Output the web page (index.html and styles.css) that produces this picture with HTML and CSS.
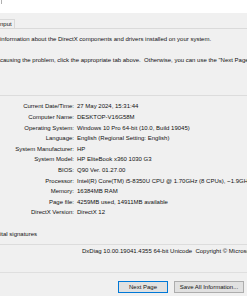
FILE: index.html
```html
<!DOCTYPE html>
<html lang="en">
<head>
    <meta charset="UTF-8">
    <meta name="viewport" content="width=device-width, initial-scale=1.0">
    <title>DirectX Diagnostic Tool</title>
    <link rel="stylesheet" href="styles.css">
</head>
<body>
    <!-- Title strip -->
    <div class="topbar"><span class="tick"></span></div>

    <!-- Tabs -->
    <div class="tabs">
        <div class="tab">nput</div>
    </div>

    <!-- System page -->
    <div class="page">
        <p class="intro">information about the DirectX components and drivers installed on your system.</p>
        <p class="intro gap">causing the problem, click the appropriate tab above.&nbsp; Otherwise, you can use the "Next Page"</p>

        <div class="group">
            <div class="info">
                <span class="label">Current Date/Time:</span><span class="value">27 May 2024, 15:31:44</span>
                <span class="label">Computer Name:</span><span class="value">DESKTOP-V16G58M</span>
                <span class="label">Operating System:</span><span class="value">Windows 10 Pro 64-bit (10.0, Build 19045)</span>
                <span class="label">Language:</span><span class="value">English (Regional Setting: English)</span>
                <span class="label">System Manufacturer:</span><span class="value">HP</span>
                <span class="label">System Model:</span><span class="value">HP EliteBook x360 1030 G3</span>
                <span class="label">BIOS:</span><span class="value">Q90 Ver. 01.27.00</span>
                <span class="label">Processor:</span><span class="value">Intel(R) Core(TM) i5-8350U CPU @ 1.70GHz (8 CPUs), ~1.9GHz</span>
                <span class="label">Memory:</span><span class="value">16384MB RAM</span>
                <span class="label">Page file:</span><span class="value">4259MB used, 14911MB available</span>
                <span class="label">DirectX Version:</span><span class="value">DirectX 12</span>
            </div>
        </div>

        <p class="check">ital signatures</p>
    </div>

    <p class="version">DxDiag 10.00.19041.4355 64-bit Unicode&nbsp; Copyright © Microsoft</p>

    <!-- Buttons -->
    <div class="buttons">
        <button class="btn default">Next Page</button>
        <button class="btn">Save All Information...</button>
    </div>
</body>
</html>
```

FILE: styles.css
```css
/* General styles */
body {
    margin: 0;
    width: 247px;
    height: 296px;
    overflow: hidden;
    background: #f0f0f0;
    color: #111111;
    font-family: 'Liberation Sans', Arial, sans-serif;
    font-size: 6px;
    line-height: 10.6px;
    white-space: nowrap;
}

p {
    margin: 0;
}

.topbar {
    height: 13px;
    background: #ffffff;
}

.tick {
    display: inline-block;
    vertical-align: top;
    width: 1px;
    height: 4px;
    margin-left: 1px;
    background: #b0b0b0;
}

/* Tabs */
.tabs {
    height: 15px;
    display: flex;
    align-items: flex-end;
    border-bottom: 1px solid #dadada;
}

.tab {
    height: 8px;
    line-height: 8px;
    padding-right: 2px;
    border: 1px solid #d9d9d9;
    border-left: none;
    border-bottom: none;
}

/* Page */
.page {
    padding-top: 5px;
    border-bottom: 1px solid #dcdcdc;
    padding-bottom: 4px;
}

.gap {
    margin-top: 10.4px;
}

.group {
    margin-top: 29.7px;
    border-top: 1px solid #dcdcdc;
    padding-top: 5.2px;
}

.info {
    display: grid;
    grid-template-columns: 74px 1fr;
    column-gap: 3px;
}

.label {
    text-align: right;
}

.check {
    margin-top: 11px;
}

.version {
    padding-left: 82px;
    margin-top: 1.7px;
    padding-bottom: 14.7px;
    border-bottom: 1px solid #dfdfdf;
}

/* Buttons */
.buttons {
    display: flex;
    justify-content: flex-end;
    gap: 6px;
    padding: 8px 3px 0 0;
}

.btn {
    height: 12px;
    padding: 0;
    font: inherit;
    line-height: 10px;
    color: #111111;
    background: #e1e1e1;
    border: 1px solid #adadad;
}

.btn.default {
    width: 50px;
    border-color: #0078d7;
}

.btn:not(.default) {
    width: 70px;
}
```
